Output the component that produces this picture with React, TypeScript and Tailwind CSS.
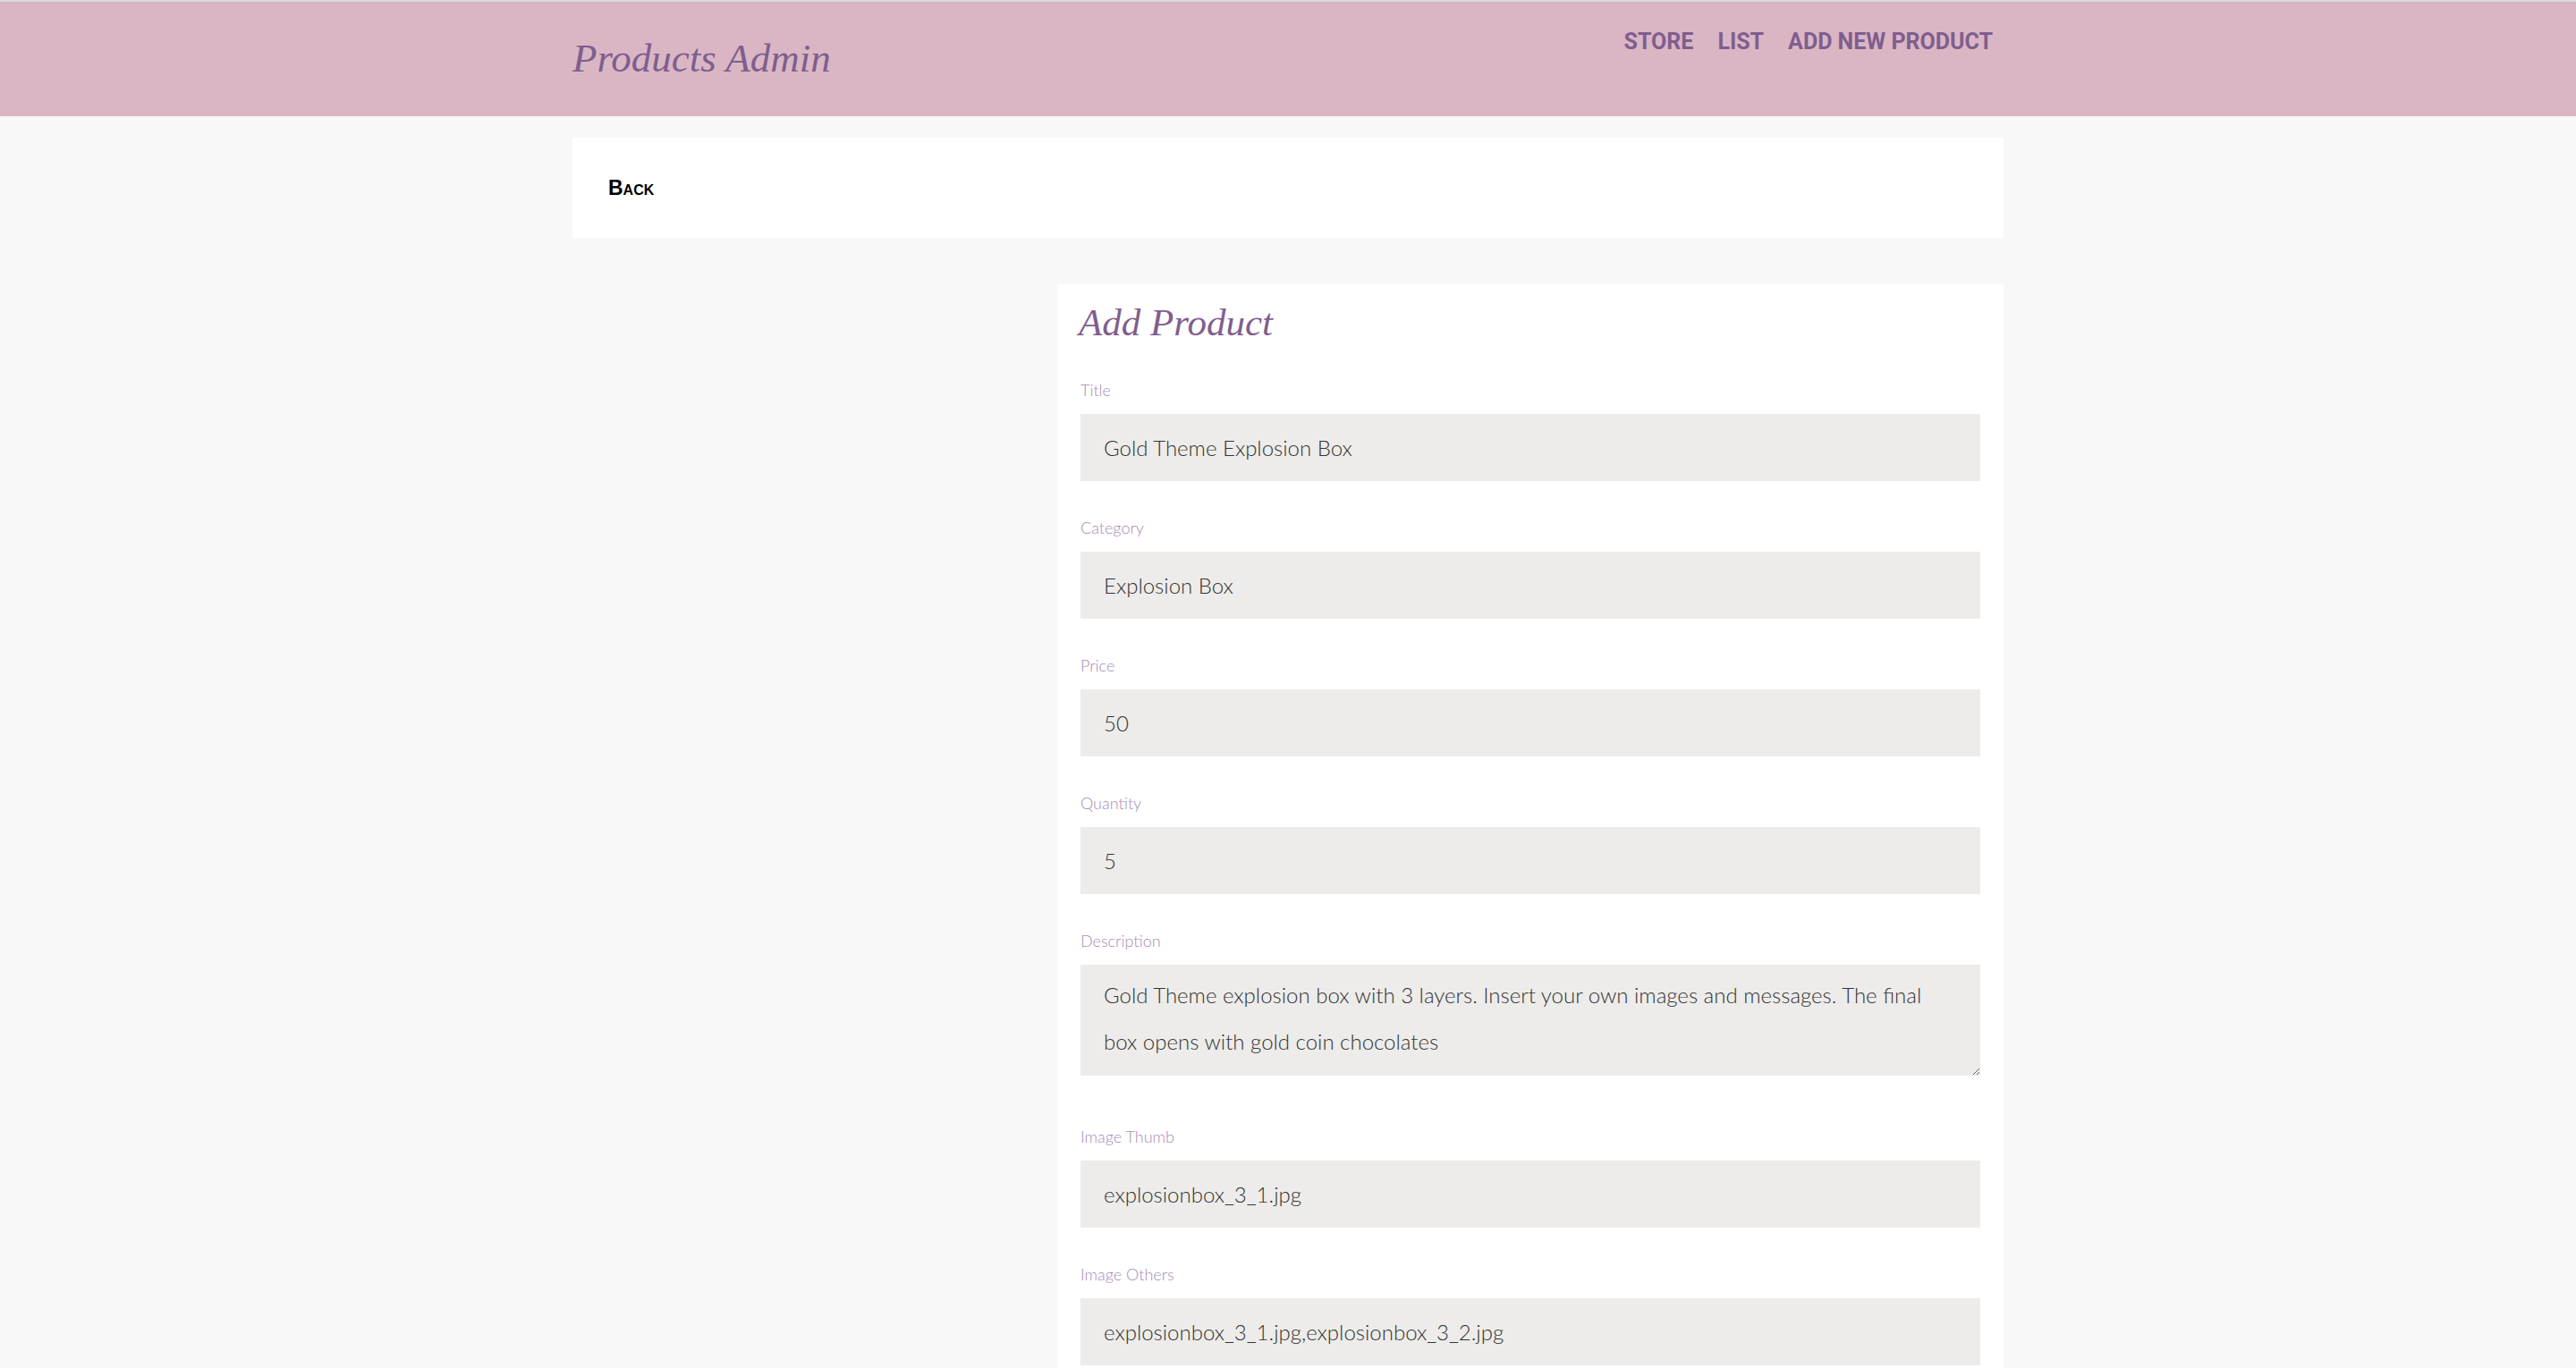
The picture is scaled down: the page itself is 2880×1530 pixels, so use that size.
import React from 'react';

const fields = [
  { label: 'Title', value: 'Gold Theme Explosion Box' },
  { label: 'Category', value: 'Explosion Box' },
  { label: 'Price', value: '50' },
  { label: 'Quantity', value: '5' },
];

const images = [
  { label: 'Image Thumb', value: 'explosionbox_3_1.jpg' },
  { label: 'Image Others', value: 'explosionbox_3_1.jpg,explosionbox_3_2.jpg' },
];

const labelCls = "block text-[18px] leading-[24px] font-light text-[#a68bb5] mb-[15px] font-['Lato',sans-serif]";
const inputCls =
  "block w-full h-[75px] px-[26px] bg-[#edecea] text-[24px] font-light text-[#333] outline-none font-['Lato',sans-serif]";

function Field({ label, value }: { label: string; value: string }) {
  return (
    <div className="mb-[40px]">
      <label className={labelCls}>{label}</label>
      <input type="text" readOnly defaultValue={value} className={inputCls} />
    </div>
  );
}

export default function App() {
  return (
    <div className="min-h-screen bg-[#f8f8f8]">
      {/* Header */}
      <header className="border-t-2 border-[#d8dbdb] bg-[#dab6c4] h-[130px]">
        <div className="w-[1600px] mx-auto flex justify-between items-start">
          <h1 className="mt-[30px] text-[45px] italic text-[#7f5e8e] font-['Liberation_Serif',serif]">
            Products Admin
          </h1>
          <nav className="mt-[26px] pr-[12px] flex gap-[27px] text-[25px] font-bold text-[#7f5e8e] font-['Roboto',sans-serif]">
            <a href="#">STORE</a>
            <a href="#">LIST</a>
            <a href="#">ADD NEW PRODUCT</a>
          </nav>
        </div>
      </header>

      <main className="w-[1600px] mx-auto pt-[24px]">
        {/* Back bar */}
        <div className="bg-white h-[112px] flex items-center pl-[40px]">
          <a href="#" className="text-[23px] font-bold text-black [font-variant:small-caps] font-['Liberation_Sans',sans-serif]">
            Back
          </a>
        </div>

        <div className="flex justify-end mt-[52px]">
          <div className="w-[1058px] bg-white px-[26px] pt-[18px]">
            <h2 className="text-[43px] leading-[50px] italic text-[#7f5e8e] mb-[38px] -ml-[2px] font-['Liberation_Serif',serif]">
              Add Product
            </h2>

            {fields.map(f => (
              <Field key={f.label} {...f} />
            ))}

            <div className="mb-[56px]">
              <label className={labelCls}>Description</label>
              <textarea
                readOnly
                defaultValue="Gold Theme explosion box with 3 layers. Insert your own images and messages. The final box opens with gold coin chocolates"
                className="block w-full h-[124px] pl-[26px] pr-[36px] pt-[8px] bg-[#edecea] text-[24px] leading-[52px] font-light text-[#333] outline-none font-['Lato',sans-serif]"
              />
            </div>

            {images.map(f => (
              <Field key={f.label} {...f} />
            ))}
          </div>
        </div>
      </main>
    </div>
  );
}
